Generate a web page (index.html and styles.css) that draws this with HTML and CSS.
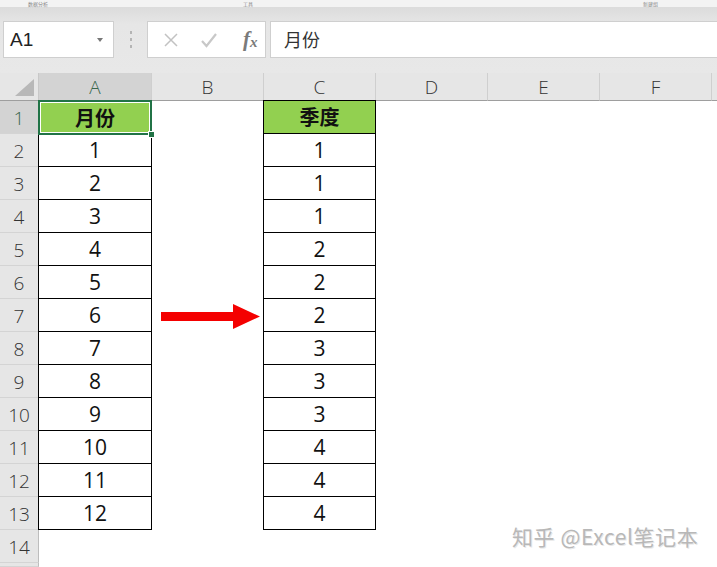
FILE: index.html
```html
<!DOCTYPE html>
<html lang="zh">
<head>
<meta charset="utf-8">
<link rel="stylesheet" href="styles.css">
</head>
<body>
<div class="app">
  <div class="ribbon-edge">
    <span class="tab t1">数据分析</span>
    <span class="tab t2">工具</span>
    <span class="tab t3">新建组</span>
  </div>
  <div class="fbar">
    <div class="namebox"><span>A1</span><span class="caret"></span></div>
    <div class="grip"><i></i><i></i><i></i></div>
    <div class="fbtns">
      <svg class="ico" width="16" height="16" viewBox="0 0 16 16"><path d="M2 2 L14 14 M14 2 L2 14" stroke="#c2c2c2" stroke-width="1.5" fill="none"/></svg>
      <svg class="ico" width="18" height="16" viewBox="0 0 18 16"><path d="M2 9 L6.5 14 L16 2" stroke="#c8c8c8" stroke-width="2.2" fill="none"/></svg>
      <span class="fx">f<sub>x</sub></span>
    </div>
    <div class="finput">月份</div>
  </div>
  <div class="sheet">
    <div class="corner"><svg width="22" height="18" viewBox="0 0 22 18"><path d="M21 0 L21 17 L2 17 Z" fill="#b8b8b8"/></svg></div>
    <div class="ch sel">A</div>
    <div class="ch">B</div>
    <div class="ch">C</div>
    <div class="ch">D</div>
    <div class="ch">E</div>
    <div class="ch">F</div>
    <div class="ch last"></div>

    <div class="rh sel">1</div>
    <div class="c a1 hd">月份<span class="handle"></span></div>
    <div class="c"></div>
    <div class="c bx hd">季度</div>
    <div class="c wide"></div>

    <div class="rh">2</div><div class="c bx">1</div><div class="c"></div><div class="c bx">1</div><div class="c wide"></div>
    <div class="rh">3</div><div class="c bx">2</div><div class="c"></div><div class="c bx">1</div><div class="c wide"></div>
    <div class="rh">4</div><div class="c bx">3</div><div class="c"></div><div class="c bx">1</div><div class="c wide"></div>
    <div class="rh">5</div><div class="c bx">4</div><div class="c"></div><div class="c bx">2</div><div class="c wide"></div>
    <div class="rh">6</div><div class="c bx">5</div><div class="c"></div><div class="c bx">2</div><div class="c wide"></div>
    <div class="rh">7</div><div class="c bx">6</div><div class="c arrow"><svg width="100" height="26" viewBox="0 0 100 26"><path d="M0 8 L72 8 L72 0 L99 12.5 L72 25 L72 17 L0 17 Z" fill="#f40000"/></svg></div><div class="c bx">2</div><div class="c wide"></div>
    <div class="rh">8</div><div class="c bx">7</div><div class="c"></div><div class="c bx">3</div><div class="c wide"></div>
    <div class="rh">9</div><div class="c bx">8</div><div class="c"></div><div class="c bx">3</div><div class="c wide"></div>
    <div class="rh">10</div><div class="c bx">9</div><div class="c"></div><div class="c bx">3</div><div class="c wide"></div>
    <div class="rh">11</div><div class="c bx">10</div><div class="c"></div><div class="c bx">4</div><div class="c wide"></div>
    <div class="rh">12</div><div class="c bx">11</div><div class="c"></div><div class="c bx">4</div><div class="c wide"></div>
    <div class="rh">13</div><div class="c bx">12</div><div class="c"></div><div class="c bx">4</div><div class="c wide"></div>
    <div class="rh">14</div><div class="c"></div><div class="c"></div><div class="c"></div><div class="c wide"><span class="wm">知乎 @Excel笔记本</span></div>
    <div class="rh stub"></div><div class="c"></div><div class="c"></div><div class="c"></div><div class="c wide"></div>
  </div>
</div>
</body>
</html>
```
FILE: styles.css
```css
* { box-sizing: border-box; }
html, body { margin: 0; padding: 0; }
body {
  width: 717px;
  height: 567px;
  overflow: hidden;
  background: #fff;
  font-family: "Noto Sans CJK SC", "Open Sans", sans-serif;
}
.app { display: flex; flex-direction: column; height: 567px; overflow: hidden; }

.ribbon-edge {
  height: 8px;
  flex: none;
  background: #f3f3f3;
  border-bottom: 1px solid #dcdcdc;
  display: flex;
  align-items: center;
}
.tab {
  font-size: 5px;
  line-height: 7px;
  color: #888;
  white-space: nowrap;
}
.t1 { margin-left: 28px; }
.t2 { margin-left: 195px; }
.t3 { margin-left: 390px; }

.fbar {
  height: 65px;
  flex: none;
  background: linear-gradient(#dcdcdc, #e6e6e6 25%, #e8e8e8);
  display: flex;
  align-items: flex-start;
  padding-top: 13px;
}
.namebox {
  margin-left: 3px;
  width: 111px;
  height: 37px;
  background: #fff;
  border: 1px solid #cfcfcf;
  display: flex;
  align-items: center;
  justify-content: space-between;
  padding: 0 10px 0 6px;
  font-family: "Liberation Sans", sans-serif;
  font-size: 19px;
  color: #222;
}
.caret {
  width: 0; height: 0;
  border-left: 3.5px solid transparent;
  border-right: 3.5px solid transparent;
  border-top: 4px solid #777;
}
.grip {
  width: 33px;
  height: 37px;
  display: flex;
  flex-direction: column;
  align-items: center;
  justify-content: center;
  gap: 4px;
}
.grip i { display: block; width: 2px; height: 3px; background: #b4b4b4; }
.fbtns {
  width: 119px;
  height: 37px;
  background: #fff;
  border: 1px solid #cfcfcf;
  display: flex;
  align-items: center;
  padding-left: 15px;
  gap: 21px;
}
.ico { display: block; }
.fx {
  font-family: "Liberation Serif", serif;
  font-style: italic;
  font-weight: bold;
  font-size: 21px;
  color: #7a7a7a;
  margin-left: 4px;
}
.fx sub { font-size: 15px; vertical-align: -1px; }
.finput {
  margin-left: 4px;
  flex: 1;
  height: 37px;
  background: #fff;
  border: 1px solid #cfcfcf;
  border-right: none;
  padding-left: 13px;
  font-size: 18px;
  line-height: 34px;
  color: #333;
}

.sheet {
  display: grid;
  grid-template-columns: 39px 113px 112px 112px 112px 112px 112px 5px;
  grid-template-rows: 28px repeat(14, 33px) 4px;
  background: #fff;
}
.corner {
  background: #e6e6e6;
  border-right: 1px solid #c8c8c8;
  border-bottom: 1px solid #9e9e9e;
  display: flex;
  align-items: flex-end;
  justify-content: flex-end;
  padding: 0 3px 3px 0;
}
.corner svg { display: block; }
.ch {
  background: #e6e6e6;
  border-right: 1px solid #cfcfcf;
  border-bottom: 1px solid #9e9e9e;
  font-family: "Open Sans", sans-serif;
  font-weight: 300;
  font-size: 19px;
  color: #333;
  text-align: center;
  line-height: 28px;
}
.ch.sel { background: #d3d3d3; color: #39664d; }
.ch.last { border-right: none; }
.rh {
  background: #e6e6e6;
  border-right: 1px solid #bdbdbd;
  border-bottom: 1px solid #d4d4d4;
  font-family: "Open Sans", sans-serif;
  font-weight: 300;
  font-size: 19px;
  color: #333;
  text-align: center;
  line-height: 35px;
}
.rh.sel { background: #d3d3d3; color: #39664d; }
.c {
  font-family: "Open Sans", "Noto Sans CJK SC", sans-serif;
  font-size: 21px;
  color: #111;
  text-align: center;
  line-height: 33px;
  position: relative;
}
.wide { grid-column: span 4; }
.bx {
  border: 1px solid #000;
  margin: -1px 0 0 -1px;
}
.hd {
  background: #92d050;
  font-family: "Noto Sans CJK SC", sans-serif;
  font-weight: 700;
  font-size: 20px;
  line-height: 32px;
}
.a1 {
  border: 2px solid #217346;
  box-shadow: inset 0 0 0 1px #fff;
  margin: -1px 0 -1px -1px;
  line-height: 32px;
  z-index: 2;
}
.handle {
  position: absolute;
  right: -5px;
  bottom: -5px;
  width: 7px;
  height: 7px;
  background: #217346;
  border: 1px solid #fff;
}
.arrow { display: flex; align-items: center; justify-content: flex-end; padding-right: 3px; }
.arrow svg { display: block; margin-top: 2px; }
.wm {
  position: absolute;
  left: 136px;
  top: -10px;
  font-family: "Noto Sans CJK SC", sans-serif;
  font-size: 21px;
  letter-spacing: 0.6px;
  color: #b8b8b8;
  white-space: nowrap;
  text-shadow: 1px 1px 0 #e8e8e8;
}
```
